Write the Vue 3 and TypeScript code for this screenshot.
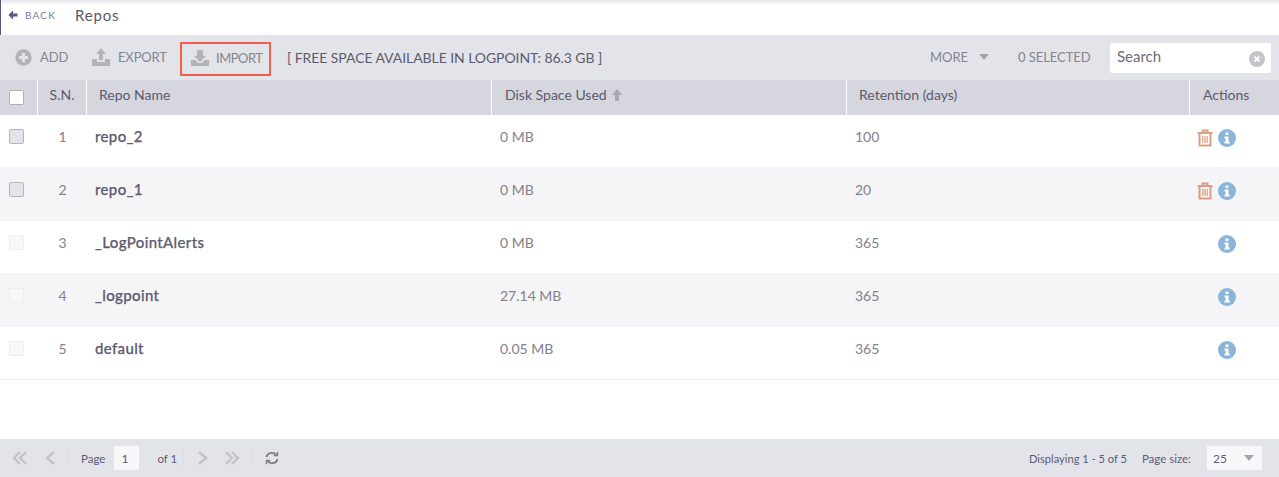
<script setup lang="ts">
interface Repo { sn: number; name: string; used: string; days: number; system: boolean }
const repos: Repo[] = [
  { sn: 1, name: 'repo_2', used: '0 MB', days: 100, system: false },
  { sn: 2, name: 'repo_1', used: '0 MB', days: 20, system: false },
  { sn: 3, name: '_LogPointAlerts', used: '0 MB', days: 365, system: true },
  { sn: 4, name: '_logpoint', used: '27.14 MB', days: 365, system: true },
  { sn: 5, name: 'default', used: '0.05 MB', days: 365, system: true },
]
</script>

<template>
  <div class="page">
    <header class="topbar">
      <span class="back"><svg width="10" height="10" viewBox="0 0 10 10"><path d="M5 .5.500 5 5 9.500V6.500h4.500v-3H5z" fill="#5b5680"/></svg>BACK</span>
      <span class="title">Repos</span>
    </header>

    <div class="toolbar">
      <span class="tool add">
        <svg width="17" height="17" viewBox="0 0 17 17"><circle cx="8.500" cy="8.500" r="8.200" fill="#b4b4b6"/><path d="M7 4h3v3h3v3h-3v3H7v-3H4V7h3z" fill="#e3e4ea"/></svg>
        ADD
      </span>
      <span class="tool export">
        <svg width="18" height="20" viewBox="0 0 18 20"><path d="M9 1l5 6h-3v6H7V7H4z" fill="#b4b4b6"/><path d="M0 12h5v3h8v-3h5v7H0z" fill="#b4b4b6"/></svg>
        EXPORT
      </span>
      <span class="tool import">
        <svg width="18" height="18" viewBox="0 0 18 18"><path d="M6 1h6v6h3l-6 6-6-6h3z" fill="#b4b4b6"/><path d="M0 11h4l3 3h4l3-3h4v6H0z" fill="#b4b4b6"/></svg>
        IMPORT
      </span>
      <span class="space">[ FREE SPACE AVAILABLE IN LOGPOINT: 86.3 GB ]</span>
      <span class="more">MORE<i class="caret"></i></span>
      <span class="selected">0 SELECTED</span>
      <label class="search">
        <span>Search</span>
        <svg width="16" height="16" viewBox="0 0 16 16"><circle cx="8" cy="8" r="8" fill="#c4c5c9"/><path d="M5.500 5.500l5 5m0-5l-5 5" stroke="#fff" stroke-width="2"/></svg>
      </label>
    </div>

    <div class="table">
      <div class="row head">
        <div class="cell c-check"><span class="box blank"></span></div>
        <div class="cell c-sn">S.N.</div>
        <div class="cell c-name">Repo Name</div>
        <div class="cell c-used">Disk Space Used
          <svg width="12" height="14" viewBox="0 0 12 14"><path d="M6 1l5 6H8v6H4V7H1z" fill="#a9aab0"/></svg>
        </div>
        <div class="cell c-days">Retention (days)</div>
        <div class="cell c-actions">Actions</div>
      </div>
      <div v-for="r in repos" :key="r.sn" class="row body" :class="{ even: r.sn % 2 === 0 }">
        <div class="cell c-check"><span class="box" :class="{ off: r.system }"></span></div>
        <div class="cell c-sn">{{ r.sn }}</div>
        <div class="cell c-name name">{{ r.name }}</div>
        <div class="cell c-used">{{ r.used }}</div>
        <div class="cell c-days">{{ r.days }}</div>
        <div class="cell c-actions icons">
          <svg v-if="!r.system" width="16" height="18" viewBox="0 0 16 18" fill="none" stroke="#dd9d85" stroke-width="2">
            <path d="M.500 4h15M5.500 4V1.500h5V4M2.500 4v12.500h11V4"/>
            <path d="M5.800 7v7M8 7v7M10.200 7v7" stroke-width="1.200"/>
          </svg>
          <svg width="18" height="18" viewBox="0 0 18 18">
            <circle cx="9" cy="9" r="9" fill="#8ab5d8"/>
            <path d="M7.500 3.500h3v2.500h-3zM6.500 7.500h4v5h1.200v2H6.500v-2h1.200v-3h-1.200z" fill="#fff"/>
          </svg>
        </div>
      </div>
    </div>

    <footer class="pager">
      <div class="pager-left">
        <svg class="p1" width="16" height="16" viewBox="0 0 16 16" fill="none" stroke="#c3c4c9" stroke-width="2.400"><path d="M8 2 2 8l6 6M14 2 8 8l6 6"/></svg>
        <svg class="p2" width="10" height="16" viewBox="0 0 10 16" fill="none" stroke="#c3c4c9" stroke-width="2.400"><path d="M9 2 2 8l7 6"/></svg>
        <span class="sep"></span>
        <span class="txt">Page</span>
        <span class="pageno">1</span>
        <span class="txt of">of 1</span>
        <span class="sep s2"></span>
        <svg class="p3" width="10" height="16" viewBox="0 0 10 16" fill="none" stroke="#c3c4c9" stroke-width="2.400"><path d="M1 2l7 6-7 6"/></svg>
        <svg class="p4" width="16" height="16" viewBox="0 0 16 16" fill="none" stroke="#c3c4c9" stroke-width="2.400"><path d="M2 2l6 6-6 6M8 2l6 6-6 6"/></svg>
        <span class="sep s3"></span>
        <svg class="p5" width="14" height="14" viewBox="0 0 14 14" fill="none" stroke="#7d7e86" stroke-width="1.800"><path d="M1.500 6C2 3.500 4.200 1.800 7 1.800c1.700 0 3.200.7 4.300 2M12.500 8c-.5 2.500-2.700 4.200-5.500 4.200-1.700 0-3.200-.7-4.300-2"/><path d="M12.500 .8v3.700H8.800M1.500 13.200V9.500h3.700" stroke-width="1.400"/></svg>
      </div>
      <div class="pager-right">
        <span class="txt disp">Displaying 1 - 5 of 5</span>
        <span class="txt size-label">Page size:</span>
        <span class="size">25<i class="caret"></i></span>
      </div>
    </footer>
  </div>
</template>

<style scoped>
.page { width: 1279px; height: 477px; display: flex; flex-direction: column; background: #fff; font-family: Lato, "Open Sans", sans-serif; overflow: hidden; }

.topbar { height: 35px; box-sizing: border-box; flex: none; display: flex; align-items: center; padding: 0 0 5px 7px; border-left: 1px solid #5c5580; background: linear-gradient(#e6e6ea 0, #fff 5px); }
.back { display: flex; align-items: center; gap: 7px; font-size: 10px; letter-spacing: 1.200px; color: #7b7a94; width: 67px; }
.title { font-size: 15px; letter-spacing: .8px; color: #5a5864; }

.toolbar { height: 45px; flex: none; box-sizing: border-box; display: flex; align-items: center; background: #e3e4ea; font-size: 13px; color: #85858d; }
.tool { display: flex; align-items: center; letter-spacing: -.15px; }
.add { margin-left: 15px; gap: 8px; width: 77px; }
.export { gap: 8px; width: 88px; }
.import { box-sizing: border-box; width: 91px; height: 34px; gap: 7px; padding-left: 9px; border: 2px solid #f0604c; margin-top: 2px; letter-spacing: -.5px; }
.tool, .more, .selected, .space { padding-bottom: 1px; }
.space { margin-left: 16px; flex: 1; color: #5d5b6c; font-size: 14px; letter-spacing: -.07px; }
.more { display: flex; align-items: center; width: 88px; margin-left: -1px; }
.more .caret { margin-left: 11px; }
.selected { width: 92px; letter-spacing: -.05px; }
.search { box-sizing: border-box; flex: none; width: 161px; height: 30px; margin-right: 8px; background: #fff; border-radius: 2px; padding: 0 6px 0 7px; display: flex; align-items: center; justify-content: space-between; font-size: 15px; color: #6e6a78; }
.search span { margin-top: -4px; }
.search svg { margin-top: 3px; }
.caret { display: inline-block; width: 0; height: 0; border-left: 5px solid transparent; border-right: 5px solid transparent; border-top: 6px solid #a4a5aa; }

.table { flex: 1; }
.row { display: flex; }
.head { height: 35px; background: #d5d6de; font-size: 14px; color: #5c5a6e; }
.head .cell { border-right: 1px solid #fff; padding-bottom: 6px; }
.head .cell:last-child { border-right: 0; }
.head .c-check { padding-bottom: 0; }
.head .c-used { padding-left: 13px; gap: 4px; }
.head .c-days { padding-left: 12px; }
.head .c-actions { padding-left: 13px; justify-content: flex-start; }
.head .c-name { padding-left: 12px; }
.body { height: 52px; font-size: 14px; color: #82828a; }
.body.even { height: 54px; background: #f5f5f8; }
.body:last-child { border-bottom: 1px solid #eeeef1; }
.cell { box-sizing: border-box; display: flex; align-items: center; }
.body .cell { padding-bottom: 10px; }
.body .icons { padding-bottom: 6px; }
.c-check { width: 38px; padding-left: 9px; }
.c-sn { width: 49px; justify-content: center; }
.c-name { width: 405px; padding-left: 8px; }
.c-used { width: 355px; padding-left: 8px; }
.c-days { width: 343px; padding-left: 8px; }
.c-actions { width: 89px; }
.name { font-size: 15px; font-weight: 500; letter-spacing: .35px; color: #5f5b70; -webkit-text-stroke: .25px #5f5b70; }
.icons { justify-content: flex-end; gap: 5px; padding-right: 43px; }
.box { box-sizing: border-box; width: 15px; height: 15px; border: 1px solid #b4b5bf; border-radius: 2px; background: #e3e4ea; }
.box.blank { background: #fff; border-color: #aeafb8; }
.box.off { background: #f8f8f9; border-color: #ecedf0; }

.pager { height: 38px; flex: none; box-sizing: border-box; background: #e3e4ea; display: flex; align-items: center; justify-content: space-between; font-size: 11.500px; color: #5d5b74; }
.pager-left, .pager-right { display: flex; align-items: center; }
.pager-left { padding-left: 12px; }
.pager-right { padding-right: 17px; }
.p2 { margin-left: 17px; }
.sep { width: 1px; height: 16px; margin-left: 12px; border-left: 1px dotted #d9dae0; }
.txt { white-space: nowrap; }
.sep + .txt { margin-left: 12px; }
.disp { font-size: 11.100px; }
.pageno { box-sizing: border-box; width: 25px; height: 24px; margin-left: 9px; padding-left: 7px; background: #f8f8fa; display: flex; align-items: center; font-size: 12px; color: #5d5b74; }
.of { margin-left: 18px; }
.s2 { margin-left: 6px; }
.p3 { margin-left: 13px; }
.p4 { margin-left: 16px; }
.s3 { margin-left: 11px; }
.p5 { margin-left: 12px; }
.size-label { margin-left: 15px; }
.size { box-sizing: border-box; width: 55px; height: 24px; margin-left: 16px; padding: 0 8px 0 6px; background: #f8f8fa; display: flex; align-items: center; justify-content: space-between; font-size: 12px; color: #5d5b74; }
</style>
